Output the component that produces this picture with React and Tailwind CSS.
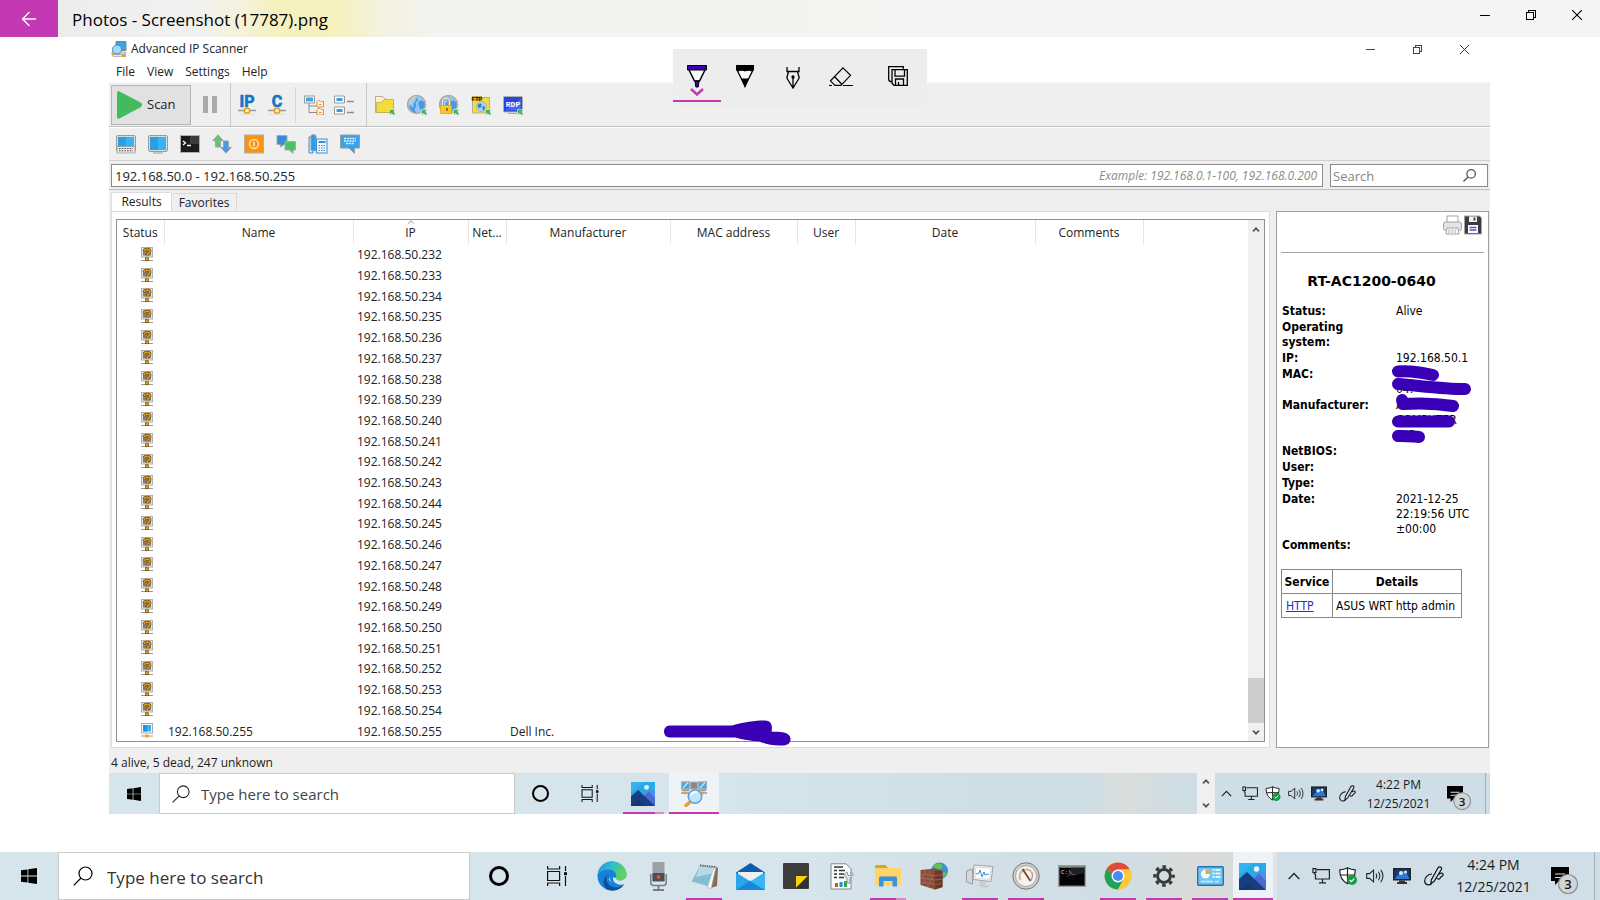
import { ArrowLeft } from 'lucide-react'

const HOSTS = Array.from({ length: 24 }, (_, i) => {
  const ip = `192.168.50.${232 + i}`
  return i === 23
    ? { ip, name: ip, manufacturer: 'Dell Inc.', alive: true }
    : { ip, name: '', manufacturer: '', alive: false }
})

const COLUMNS = [
  { label: 'Status', width: 'w-[47px]' },
  { label: 'Name', width: 'w-[189px]' },
  { label: 'IP', width: 'w-[115px]', sorted: true },
  { label: 'Net...', width: 'w-[38px]' },
  { label: 'Manufacturer', width: 'w-[164px]' },
  { label: 'MAC address', width: 'w-[127px]' },
  { label: 'User', width: 'w-[58px]' },
  { label: 'Date', width: 'w-[180px]' },
  { label: 'Comments', width: 'w-[108px]' },
]

const DETAILS = [
  { label: 'Status:', lines: ['Alive'] },
  { label: 'Operating system:', lines: [] },
  { label: 'IP:', lines: ['192.168.50.1'] },
  { label: 'MAC:', lines: ['\u00a0', '04:'] },
  { label: 'Manufacturer:', lines: ['A', 'COMPUTER', 'INC.'] },
  { label: 'NetBIOS:', lines: [] },
  { label: 'User:', lines: [] },
  { label: 'Type:', lines: [] },
  { label: 'Date:', lines: ['2021-12-25', '22:19:56 UTC', '±00:00'] },
  { label: 'Comments:', lines: [] },
]

/* ---------- window controls ---------- */

function WindowControls({ small }) {
  const size = small ? 'w-[9px] h-[9px]' : 'w-[10px] h-[10px]'
  const cell = small ? 'w-[47px] h-full flex items-center justify-center text-[#333]' : 'w-[46px] h-full flex items-center justify-center text-black'
  return (
    <div className="flex h-full">
      <button aria-label="Minimize" className={cell}>
        <svg viewBox="0 0 10 10" className={size} stroke="currentColor" shapeRendering="crispEdges"><path d="M0 5.5h10" /></svg>
      </button>
      <button aria-label="Restore" className={cell}>
        <svg viewBox="0 0 10 10" className={size} fill="none" stroke="currentColor" shapeRendering="crispEdges">
          <path d="M.5 2.500h7v7h-7zM2.500 2V.5h7v7H8" />
        </svg>
      </button>
      <button aria-label="Close" className={cell}>
        <svg viewBox="0 0 10 10" className={size} stroke="currentColor" strokeWidth="1.1"><path d="M0 0l10 10M10 0L0 10" /></svg>
      </button>
    </div>
  )
}

/* ---------- scanner toolbar icons ---------- */

function Icon({ children, className = 'w-[20px] h-[20px]' }) {
  return <svg viewBox="0 0 20 20" className={className} fill="none">{children}</svg>
}

const GreenArrow = () => (
  <>
    <path d="M14 14h6v6h-6z" fill="#cfd8cf" opacity=".7" />
    <path d="M15 15h4.500l-1.500 1.500L20 19l-1 1-2.500-2.200L15 19.500z" fill="#3fae55" />
  </>
)

const GlobeShape = () => (
  <>
    <circle cx="9.500" cy="9.500" r="9" fill="#8fc8f6" stroke="#a8a8a8" strokeWidth="1.400" />
    <path d="M9 1c-4 0-7 3.500-7 7.500l2 1 2-2-1-2 3-1z" fill="#c9c9c9" />
    <path d="M10 2c1 1.500-2 2-1.500 3.500S5.500 8 6.500 10s-1 3.500-2 1.500-1.500-1-2-1.500c0 4 3 7.500 6 8 0-2-1.500-4-.5-5s2-2.500 1-4 1-2 2-4zM12.500 6c2-1.500 4.500 0 5 3s-1.500 5.500-3.500 6-1-3-2-4-1-4 .5-5z" fill="#4b97e0" />
  </>
)

const NetworkIcon = ({ letter }) => (
  <Icon className="w-[20px] h-[20px] overflow-visible">
    <text x="10" y="12" textAnchor="middle" fontFamily="Liberation Sans Narrow, Roboto, sans-serif" fontWeight="700" fontSize="16" fill="#1274c4" stroke="#1274c4" strokeWidth=".6">{letter}</text>
    <path d="M1 15.500h18" stroke="#999" strokeWidth="1.500" />
    <path d="M2 19.200h16" stroke="#ddd" />
    <rect x="7.500" y="13.500" width="5" height="4.500" rx="1" fill="#fff3c0" stroke="#e59b1b" strokeWidth="1.500" />
  </Icon>
)

const TreeIcon = () => (
  <Icon>
    <rect x=".5" y="1" width="10" height="7" fill="#fff" stroke="#9a9a9a" />
    <rect x="2" y="2.500" width="7" height="4" fill="#38a9ef" />
    <path d="M5 8v9.500h8M5 11h8" stroke="#8c8c8c" />
    <path d="M13 6.500l1-1h2l1 1h2.500V12H13zM13 14.500l1-1h2l1 1h2.500V20H13z" fill="#fff0d8" stroke="#dd9641" />
    <path d="M15 9.500h2.500M15 17.500h2.500" stroke="#dd9641" />
  </Icon>
)

const ListIcon = () => (
  <Icon>
    <path d="M.5 1h10v7H.5zM.5 12h10v7H.5z" fill="#fff" stroke="#9a9a9a" />
    <path d="M2.500 3h6v3h-6zM2.500 14h6v3h-6z" fill="#2f9fe6" />
    <path d="M13 6.500h7M13 17.500h7" stroke="#8c8c8c" strokeWidth="1.500" />
  </Icon>
)

const FolderIcon = () => (
  <Icon>
    <path d="M.5 17.500V1.500h7l2 2h1V8h8v9.500z" fill="#fff0cf" stroke="#b5ae98" />
    <path d="M1.500 17.500V7.500h4l4-3h9v13z" fill="#f4dc3b" stroke="#b9a73f" strokeWidth=".7" />
    <GreenArrow />
  </Icon>
)

const GlobeIcon = () => <Icon><GlobeShape /><GreenArrow /></Icon>

const LockIcon = () => (
  <Icon>
    <GlobeShape />
    <path d="M3.500 11V6.500a3.500 3.500 0 017 0V11" stroke="#9c9c9c" strokeWidth="3" />
    <path d="M3.500 11V6.500a3.500 3.500 0 017 0V11" stroke="#e8e8e8" strokeWidth="1.300" />
    <rect x="1.500" y="10.500" width="11" height="8" fill="#fbc91d" stroke="#d6a51d" strokeWidth=".7" />
    <path d="M8 13v3" stroke="#a5680c" strokeWidth="2" />
    <GreenArrow />
  </Icon>
)

const FtpIcon = () => (
  <Icon>
    <path d="M1.500 18V4.500H9l1.500-2h8V18z" fill="#f4dc3b" stroke="#b5ae98" />
    <path d="M1 1h10v5H1z" fill="#c9b02e" />
    <text x="6" y="6" textAnchor="middle" fontFamily="Liberation Sans Narrow, Roboto, sans-serif" fontWeight="700" fontSize="6" fill="#111">FTP</text>
    <circle cx="10.500" cy="11.500" r="5" fill="#a9d3f5" stroke="#999" strokeWidth=".6" />
    <path d="M8 9c2-1 3 0 2.500 2S8 14 7 12s0-2.500 1-3zM12 11c2 0 2.500 2 1 4s-2-4-1-4z" fill="#2d7fd0" />
    <GreenArrow />
  </Icon>
)

const RdpIcon = () => (
  <Icon>
    <rect x=".5" y="1.500" width="19" height="15.500" rx="1" fill="#2b45d8" stroke="#b0b0b0" />
    <path d="M2 15.500l16-12v12z" fill="#4466f2" />
    <text x="10" y="11.500" textAnchor="middle" fontFamily="Liberation Mono, monospace" fontWeight="700" fontSize="8" fill="#fff">RDP</text>
    <path d="M5 18.500h9" stroke="#aaa" />
    <GreenArrow />
  </Icon>
)

const MonitorIcon = ({ keyboard }) => (
  <Icon>
    <rect x=".5" y="1.500" width="19" height="16" rx="1.500" fill="#d9d9d9" stroke="#9b9b9b" />
    <path d="M2 3h16v13H2z" fill="#38b4f5" />
    <path d="M2 3h8v13H2z" fill="#279fe2" />
    {keyboard && <path d="M1 12.500h18V19H1z" fill="#e6e6e6" stroke="#999" strokeWidth=".7" />}
    {keyboard && <path d="M3 14.500h14M3 16.800h14" stroke="#555" strokeWidth="1" strokeDasharray="1.500 1.200" />}
    {!keyboard && <path d="M5 19h10" stroke="#999" />}
  </Icon>
)

const ConsoleIcon = () => (
  <Icon>
    <rect x=".5" y="1.500" width="19" height="17" fill="#1c1c1c" stroke="#b0b0b0" />
    <path d="M10 2h9v8h-9z" fill="#3c3c3c" />
    <path d="M3 7l2.500 2L3 11M7 11.500h4" stroke="#fff" strokeWidth="1.300" />
  </Icon>
)

const WakeIcon = () => (
  <Icon>
    <path d="M6 .7l5.300 6H8.500V13h-5V6.700H.7z" fill="#5fc673" stroke="#a5a5a5" />
    <path d="M14 19.300l-5.300-6h2.800V7h5v6.300h2.800z" fill="#4c98e4" stroke="#a5a5a5" />
  </Icon>
)

const PowerIcon = () => (
  <Icon>
    <rect x=".5" y="1" width="19" height="18" fill="#fa9312" stroke="#b0b0b0" />
    <circle cx="10" cy="10" r="4.500" stroke="#ffe2b0" strokeWidth="1.500" />
    <path d="M10 7.500v5" stroke="#ffe2b0" strokeWidth="1.500" />
  </Icon>
)

const ChatIcon = () => (
  <Icon>
    <path d="M1 1.500h10v9H8L4.500 13v-2.500H1z" fill="#3b8ad8" stroke="#a8a8a8" />
    <path d="M9 7.500h10.500V16H17v3.500L13.500 16H9z" fill="#4cc266" stroke="#a8a8a8" />
  </Icon>
)

const PhoneIcon = () => (
  <Icon>
    <path d="M1 3h4v16H1z" fill="#d6ebfb" stroke="#3b8fd2" />
    <rect x="3" y=".8" width="5" height="16" rx="1.500" fill="#2f9be4" stroke="#9a9a9a" />
    <rect x="8.500" y="5" width="10.500" height="14" fill="#ecf6fd" stroke="#3b8fd2" />
    <path d="M10.500 8h7" stroke="#3b8fd2" strokeWidth="2" />
    <path d="M10.500 11.500h7M10.500 14h7M10.500 16.500h7" stroke="#3b8fd2" strokeWidth="1.200" strokeDasharray="1.500 1" />
  </Icon>
)

const MessageIcon = () => (
  <Icon>
    <path d="M.5 1h19v13h-5V19.500L9 14H.5z" fill="#3aa2ea" stroke="#9b9b9b" />
    <path d="M4 4.500h12M4 7h12M6 9.500h8" stroke="#e8f5ff" strokeWidth="1.300" strokeDasharray="2 .8" />
  </Icon>
)

const AppIcon = () => (
  <svg viewBox="0 0 16 16" className="w-4 h-4" fill="none">
    <path d="M5 .5h10v9H5z" fill="#38a5ea" stroke="#858585" />
    <path d="M1 11h14v2H1zM2 13.500h12v2H2z" fill="#e4e4e4" stroke="#999" strokeWidth=".6" />
    <circle cx="6" cy="8.500" r="4.500" fill="#a5dbf8" stroke="#3f8fc8" />
    <path d="M1 14l2-2M11 15h4" stroke="#e6a02a" strokeWidth="2" />
  </svg>
)

const UnknownHostIcon = () => (
  <svg viewBox="0 0 12 15" className="block w-[12px] h-[15px]" fill="none" aria-label="Unknown">
    <rect x=".5" y=".5" width="11" height="9.500" fill="#e2e2e2" stroke="#b0b0b0" />
    <rect x="2" y="2" width="8" height="6.500" fill="#7d7d7d" />
    <path d="M0 13.500h12" stroke="#999" />
    <path d="M3 4.200C3.500 1.500 9 1.500 9 4.200 9 6.300 6 6 6 9" stroke="#6b4a10" strokeWidth="2.800" />
    <path d="M3 4.200C3.500 1.500 9 1.500 9 4.200 9 6.300 6 6 6 9" stroke="#e69d14" strokeWidth="1.500" />
    <rect x="4.600" y="10.700" width="2.800" height="3" fill="#e69d14" stroke="#6b4a10" strokeWidth=".7" />
  </svg>
)

const AliveHostIcon = () => (
  <svg viewBox="0 0 12 15" className="block w-[12px] h-[15px]" fill="none" aria-label="Alive">
    <rect x=".5" y=".5" width="11" height="9.500" fill="#fff" stroke="#a8a8a8" />
    <path d="M2 2h8v6.500H2z" fill="#39aef0" />
    <path d="M2 2h4v6.500H2z" fill="#2492dd" />
    <path d="M0 13h12" stroke="#999" />
    <rect x="4" y="11.500" width="4" height="3" rx="1" fill="#eea91c" />
  </svg>
)

const SearchGlyph = ({ className, width = 1.2 }) => (
  <svg viewBox="0 0 20 20" className={className} fill="none" stroke="currentColor" strokeWidth={width}>
    <circle cx="12.500" cy="7.500" r="6.500" />
    <path d="M8 12L.7 19.300" />
  </svg>
)

const Caret = ({ down, className = 'w-[8px] h-[5px]' }) => (
  <svg viewBox="0 0 8 5" className={className} fill="none" stroke="#555" strokeWidth="1.700">
    <path d={down ? 'M1 .7l3 3 3-3' : 'M1 4.300l3-3 3 3'} />
  </svg>
)

/* ---------- taskbar icons ---------- */

const StartIcon = ({ className }) => (
  <svg viewBox="0 0 16 16" className={className} fill="#000">
    <path d="M0 2.300L6.500 1.400v6.200H0zM7.300 1.300L16 0v7.600H7.300zM0 8.400h6.500v6.200L0 13.700zM7.300 8.400H16V16l-8.700-1.300z" />
  </svg>
)

const TaskViewIcon = ({ className }) => (
  <svg viewBox="0 0 20 20" className={className} fill="none" stroke="#111" strokeWidth="1.200">
    <path d="M.6 5.500h12v9H.6zM.6 0v3h12V0M.6 20v-3h12v3M18.500 0v5M18.500 10v10" />
    <path d="M17 6.200h3v3h-3z" fill="#111" stroke="none" />
  </svg>
)

const PhotosIcon = ({ className }) => (
  <svg viewBox="0 0 27 27" className={className}>
    <path d="M0 0h27v27H0z" fill="#2aa9ea" />
    <path d="M0 0h14L0 12z" fill="#34b3f0" />
    <path d="M11 17L22 7l5 5v15H11z" fill="#4a90e8" />
    <path d="M15 16l12 11V18l-7-7z" fill="#4b68d0" />
    <path d="M0 16l8-7 19 18H0z" fill="#173f80" />
    <path d="M0 27l8-7 8 7z" fill="#123468" opacity=".6" />
    <circle cx="17.500" cy="6" r="2.700" fill="#eaf6fd" />
  </svg>
)

const ScannerIcon = ({ className }) => (
  <svg viewBox="0 0 26 26" className={className} fill="none">
    <path d="M.5 1h8v7h-8zM17.500 1h8v7h-8z" fill="#39a9e8" stroke="#a8a8a8" strokeWidth="1.500" />
    <path d="M2 7l5-5.500M19 7l5-5.500" stroke="#b8e3fa" strokeWidth="1.500" />
    <path d="M9.500 1h7v7h-7z" fill="#888" stroke="#b5b5b5" />
    <path d="M1 9.500h7M18 9.500h7M0 12h9M17 12h9" stroke="#999" strokeWidth="1.300" />
    <path d="M3 12h2M21 12h2" stroke="#eba31e" strokeWidth="2.500" />
    <path d="M10 20l-5 4.500" stroke="#e9a223" strokeWidth="3.500" strokeLinecap="round" />
    <circle cx="14" cy="15.500" r="6.700" fill="#bfe6fb" stroke="#5c9fd8" strokeWidth="1.500" />
    <path d="M10 14.500c1-3 4-4 6-3" stroke="#fff" strokeWidth="1.500" />
  </svg>
)

const EdgeIcon = () => (
  <svg viewBox="0 0 30 30" className="w-[30px] h-[30px]">
    <defs>
      <linearGradient id="edgeTop" x1="0" y1="0" x2="1" y2=".4">
        <stop offset="0" stopColor="#1c8fd8" /><stop offset=".5" stopColor="#2fbfd0" /><stop offset="1" stopColor="#62d35b" />
      </linearGradient>
    </defs>
    <circle cx="15" cy="15" r="14.500" fill="#1681d6" />
    <path d="M.6 14C1.500 6 7.500.5 15 .5c8 0 14.500 5.500 14.500 12.500 0 4-3 6.500-6.500 6.500-3 0-5-1-4.500-2.500 2-4-1-8.500-6.500-8.500C7 8.500 2 10.500.6 14z" fill="url(#edgeTop)" />
    <path d="M9.500 16c-1 6 4 10.500 10 10.500 3.500 0 6-1.500 7.500-3C24.500 27.500 20 29.500 15 29.500c-6 0-9-5-8.500-9.500C7 17 8.500 14.500 12 14z" fill="#0f4f9d" />
    <path d="M12.500 16.500c.5 4.500 4.500 7 8.500 7 3 0 5-1 7-2.500l-1 2c-4 1.500-8 1-11.500-1.200s-4-4-3-5.300z" fill="#d7e6ed" />
    <path d="M18.500 17c.4 1.500 2 2.500 4.500 2.500 3 0 6-2 6.500-5l.5 4-2 4c-3 1-7 1.200-9.500-.5s-3-4-2-6z" fill="#d7e6ed" />
  </svg>
)

const MicIcon = () => (
  <svg viewBox="0 0 17 29" className="w-[17px] h-[29px]" fill="none">
    <rect x="2.500" y="0" width="12" height="20" rx="1" fill="#9aa0a6" />
    <path d="M2.500 11h12v8h-12z" fill="#4c4f52" />
    <circle cx="8.500" cy="15" r="2" fill="#e1523d" />
    <path d="M.8 12v8.500c0 2 1.500 3 3 3h9.400c1.500 0 3-1 3-3V12" stroke="#777c80" strokeWidth="1.500" />
    <path d="M8.500 23.500V28M3 28h11" stroke="#777c80" strokeWidth="1.800" />
  </svg>
)

const NotepadIcon = () => (
  <svg viewBox="0 0 27 27" className="w-[27px] h-[27px]">
    <path d="M24 3l3 2-1 18-6 2z" fill="#8a6a50" />
    <path d="M9 2l16 2-5 22-4-2z" fill="#f4f6f7" stroke="#a5afb5" strokeWidth=".7" />
    <path d="M9 3l14 1.500L17 23 .5 18.500z" fill="#86bcd0" />
    <path d="M9 3l14 1.500-2 6L5 14z" fill="#b5d9e5" />
    <path d="M9 2.500l15 1.500" stroke="#666" strokeWidth="2" strokeDasharray="1.300 1" />
  </svg>
)

const MailIcon = () => (
  <svg viewBox="0 0 29 27" className="w-[29px] h-[27px]">
    <path d="M0 9.500L14.500 0 29 9.500V12H0z" fill="#0f5cad" />
    <path d="M2 9h25v10H2z" fill="#f0f0f0" />
    <path d="M0 9.500l14.500 9L29 9.500V27H0z" fill="#2aa4ea" />
    <path d="M0 27l14.500-9.500L29 27z" fill="#1787d8" />
    <path d="M14.500 18.500L29 9.500V27z" fill="#38b5f2" />
  </svg>
)

const StickyIcon = () => (
  <svg viewBox="0 0 26 26" className="w-[26px] h-[26px]">
    <rect width="26" height="26" rx="1" fill="#3d3d3d" />
    <path d="M13 13h12L13 25z" fill="#f9ce0d" />
    <path d="M25 13v12H13z" fill="#2f2f2f" />
  </svg>
)

const ReportIcon = () => (
  <svg viewBox="0 0 24 27" className="w-[24px] h-[27px]" fill="none">
    <path d="M1 .8h15l5 5V26H1z" fill="#fbfcfc" stroke="#7d8a92" />
    <path d="M4 4h9M4 7.500h3M9 7.500h6M4 11h3M9 11h5M4 14.500h3M9 14.500h5" stroke="#333" strokeWidth="1.500" />
    <path d="M5 24v-4h3v4z" fill="#e04f2c" /><path d="M9.500 24v-5h3v5z" fill="#2f8ad4" /><path d="M14 24v-6h3v6z" fill="#35a845" />
    <path d="M17 9c-3 1-3 5 0 6v5h3v-5c3-1 4-5 1-6v3.500h-3z" fill="#dfe7ec" stroke="#7f97a5" />
  </svg>
)

const ExplorerIcon = () => (
  <svg viewBox="0 0 26 22" className="w-[26px] h-[22px]">
    <path d="M0 1.500C0 .7.700 0 1.500 0h9L13 3H0z" fill="#e3a01b" />
    <path d="M0 3h24.500c.8 0 1.500.7 1.500 1.500V20H0z" fill="#fed56b" />
    <path d="M4 21.500V13c0-1 .8-1.500 1.500-1.500h15c.8 0 1.500.5 1.500 1.500v8.500h-4.500V16h-9v5.500z" fill="#3a92d8" />
  </svg>
)

const FirewallIcon = () => (
  <svg viewBox="0 0 28 28" className="w-[28px] h-[28px]" fill="none">
    <circle cx="19.500" cy="9" r="8.500" fill="#3f8fd6" />
    <path d="M14 3c3-2 6-2 8 0s-1 4-3 4-6-2-5-4zM22 10c3-1 5 1 4 3s-4 3-5 1 0-3 1-4z" fill="#67c24b" />
    <path d="M.5 8L15 6.500l7.500 2.500v16L15 27.500.5 23z" fill="#8a4c3a" />
    <path d="M15 8.500l7.500.5v16L15 27.500z" fill="#6a3729" />
    <path d="M.5 12l14.500 1.500 7.500-1M.5 16l14.500 2 7.500-1M.5 20l14.500 2.500 7.500-1M5 8v4M10 8v5M3 12v4M8 13v4M12 13v5M5 17v4M10 17v5M3 21v3M8 22v3" stroke="#b07a66" strokeWidth=".6" />
  </svg>
)

const PerfIcon = () => (
  <svg viewBox="0 0 28 26" className="w-[28px] h-[26px]" fill="none">
    <path d="M.5 8l6-2v15l-6-2z" fill="#d4d7d9" stroke="#989c9f" />
    <path d="M8 2l19 1.500-2 15-18-2z" fill="#eef1f2" stroke="#9ea3a6" />
    <path d="M10 4.200l15 1.200-1.500 11L9 15z" fill="#fff" stroke="#c6ccd0" strokeWidth=".6" />
    <path d="M10 11l3-1 1-3 2 7 2-5 1 3 4-1" stroke="#3a8fd0" />
    <path d="M14 18l-1 4h-4l11 3 4-2-5-1 .5-3z" fill="#c9cccf" />
  </svg>
)

const GaugeIcon = () => (
  <svg viewBox="0 0 28 28" className="w-[28px] h-[28px]" fill="none">
    <circle cx="14" cy="14" r="13.200" fill="#cfcfcf" stroke="#777" />
    <circle cx="14" cy="14" r="10.500" fill="#f5f3ef" stroke="#a7a5a0" />
    <path d="M8.500 18a7 7 0 0111-8.500" stroke="#c9b9a5" strokeWidth="2" />
    <path d="M10.500 7l8 12" stroke="#8a3c20" strokeWidth="1.800" />
    <path d="M19.500 10c1.500 2 1 6-1 9" stroke="#b59a7a" strokeWidth="1.500" />
  </svg>
)

const CmdIcon = () => (
  <svg viewBox="0 0 28 22" className="w-[28px] h-[22px]" fill="none">
    <rect x=".7" y=".7" width="26.600" height="20.600" fill="#050505" stroke="#9a9fa3" strokeWidth="1.400" />
    <path d="M1.500 2h25" stroke="#ccc" />
    <path d="M14 2.500h12.500V8L8 12z" fill="#333" opacity=".6" />
    <text x="3" y="8.500" fontFamily="Liberation Mono, monospace" fontSize="6" fill="#ddd">C:\_</text>
  </svg>
)

const ChromeIcon = () => (
  <svg viewBox="0 0 28 28" className="w-[28px] h-[28px]">
    <circle cx="14" cy="14" r="13.500" fill="#fcc934" />
    <path d="M14 14L2.300 7.300a13.500 13.500 0 0123.400 0z" fill="#dd4b3e" />
    <path d="M14 14L2.300 7.300A13.500 13.500 0 0014 27.500l5.500-10z" fill="#23a05a" />
    <path d="M14 7.300h11.700a13.500 13.500 0 01-.2 13.700L14 27.500l5.500-10z" fill="#fcc934" />
    <circle cx="14" cy="14" r="6.500" fill="#fff" />
    <circle cx="14" cy="14" r="5" fill="#4a8af4" />
  </svg>
)

const ControlPanelIcon = () => (
  <svg viewBox="0 0 27 20" className="w-[27px] h-[20px]" fill="none">
    <rect x=".7" y=".7" width="25.600" height="18.600" rx="1" fill="#6fc5f3" stroke="#2473ab" strokeWidth="1.400" />
    <circle cx="8.500" cy="8" r="4.500" fill="#f4f9fc" />
    <path d="M8.500 8V3.500A4.500 4.500 0 0113 8z" fill="#f4a125" />
    <path d="M15.500 4h8M15.500 7.500h8M15.500 11h8" stroke="#e2f4fd" strokeWidth="1.800" strokeDasharray="2 1 8" />
    <path d="M4 15.500h12M18 15.500h4" stroke="#c9ebfb" strokeWidth="1.500" />
  </svg>
)

const SettingsIcon = () => (
  <svg viewBox="0 0 24 24" className="w-[22px] h-[22px]" fill="none" stroke="#3a3a3a">
    <circle cx="12" cy="12" r="7" strokeWidth="3.200" />
    <circle cx="12" cy="12" r="10" strokeWidth="3.600" strokeDasharray="3.900 3.954" strokeDashoffset="1.950" />
  </svg>
)

/* ---------- tray ---------- */

const TrayNetwork = ({ className }) => (
  <svg viewBox="0 0 18 16" className={className} fill="none" stroke="#222" strokeWidth="1.200">
    <path d="M5 1.600h12.400v9.400H3.500V6M10.500 11v3.500M7 14.800h7" />
    <path d="M1 .6h3v4H1zM2.500 4.600v2" />
  </svg>
)

const TrayShield = ({ className }) => (
  <svg viewBox="0 0 18 18" className={className} fill="none">
    <path d="M8.500.8c2.500 1.500 5 2 7.700 2 .3 6-2.200 11-7.700 14C3 13.800.5 8.800.8 2.800c2.700 0 5.200-.5 7.700-2z" fill="#fff" stroke="#222" strokeWidth="1.200" />
    <path d="M8.500 1v15.500M1 8h15" stroke="#222" strokeWidth="1.200" />
    <circle cx="13" cy="13" r="5" fill="#169a45" />
    <path d="M10.700 13l1.700 1.600 2.900-3" stroke="#fff" strokeWidth="1.200" />
  </svg>
)

const TrayVolume = ({ className }) => (
  <svg viewBox="0 0 19 16" className={className} fill="none" stroke="#222" strokeWidth="1.100">
    <path d="M.7 5.500h3L8 1.700v12.600l-4.300-3.800h-3z" />
    <path d="M10.500 5.500c1 1.500 1 3.500 0 5M13 3.500c2 2.700 2 6.300 0 9M15.500 1.500c3 4 3 9 0 13" />
  </svg>
)

const TrayDisplay = ({ className }) => (
  <svg viewBox="0 0 18 16" className={className}>
    <path d="M0 0h18v12.500H0z" fill="#222" />
    <path d="M1.500 1.500h15v9.500h-15z" fill="#123c78" />
    <path d="M1.500 11L9 3l4 1 3.500 7z" fill="#2f78d0" />
    <circle cx="8" cy="5" r="2" fill="#dfe9f5" /><circle cx="12.500" cy="4" r="1.500" fill="#dfe9f5" />
    <path d="M6 12.500h6v1.500h2V16H4v-2h2z" fill="#333" />
  </svg>
)

const TrayPen = ({ className }) => (
  <svg viewBox="0 0 20 20" className={className} fill="none" stroke="#111" strokeWidth="1.200">
    <path d="M16 .8c1.500.2 2 1.500 1.300 2.700L10 15.500l-3 2 .3-3.500L14 1.800c.5-.8 1.200-1.100 2-1z" />
    <path d="M8 8c-4 0-7.300 3.500-7.300 7 0 4 4.500 5 7 2.500M12.500 12c1.500 2 3.500 1 4-.5s3.500-1.500 2.500-3.500c-1-1.500-3-1-4 .5" />
  </svg>
)

const TrayNote = ({ className }) => (
  <svg viewBox="0 0 27 27" className={className}>
    <path d="M0 0h18v14H8l-4 4v-4H0z" fill="#000" />
    <path d="M4 7h10M4 10.500h8" stroke="#d5e2e8" strokeWidth="1.200" />
    <circle cx="17" cy="17" r="9.500" fill="#d2d5d6" stroke="#8a8f92" strokeWidth="1.200" />
    <text x="17" y="22" textAnchor="middle" fontFamily="Open Sans, sans-serif" fontWeight="600" fontSize="13" fill="#111">3</text>
  </svg>
)

function Tray({ small, time, date }) {
  const s = small
    ? { cell: 'w-[23px]', pen: 'w-[34px]', clock: 'w-[69px] text-xs leading-[19px]', note: 'w-[52px]', icon: 'w-[16px] h-[15px]', penIcon: 'w-[17px] h-[17px]', noteIcon: 'w-[24px] h-[24px]', caret: 'w-[11px] h-[7px]', end: 'w-[5px]' }
    : { cell: 'w-[27px]', pen: 'w-[38px]', clock: 'w-[81px] text-sm leading-[22px]', note: 'w-[60px]', icon: 'w-[18px] h-[18px]', penIcon: 'w-[20px] h-[20px]', noteIcon: 'w-[27px] h-[27px]', caret: 'w-[12px] h-[8px]', end: 'w-[6px]' }
  const btn = 'flex items-center justify-center h-full'
  return (
    <div className="flex items-center h-full">
      <button aria-label="Show hidden icons" className={`${btn} ${s.cell}`}>
        <svg viewBox="0 0 12 8" className={s.caret} fill="none" stroke="#222" strokeWidth="1.300"><path d="M.7 7L6 1.500 11.300 7" /></svg>
      </button>
      <button aria-label="Network" className={`${btn} ${s.cell}`}><TrayNetwork className={s.icon} /></button>
      <button aria-label="Security" className={`${btn} ${s.cell}`}><TrayShield className={s.icon} /></button>
      <button aria-label="Volume" className={`${btn} ${s.cell}`}><TrayVolume className={s.icon} /></button>
      <button aria-label="Display" className={`${btn} ${s.cell}`}><TrayDisplay className={s.icon} /></button>
      <button aria-label="Ink workspace" className={`${btn} ${s.pen}`}><TrayPen className={s.penIcon} /></button>
      <div className={`text-center whitespace-nowrap text-[#1a1a1a] ${s.clock}`}>
        <div>{time}</div>
        <div>{date}</div>
      </div>
      <button aria-label="3 notifications" className={`${btn} ${s.note} pt-2`}><TrayNote className={s.noteIcon} /></button>
      <div className={`h-full border-l border-[#a0afb6] ${s.end}`} />
    </div>
  )
}

const APPS = [
  { name: 'Edge', icon: EdgeIcon },
  { name: 'Voice Recorder', icon: MicIcon },
  { name: 'Notepad', icon: NotepadIcon, open: true },
  { name: 'Mail', icon: MailIcon },
  { name: 'Sticky Notes', icon: StickyIcon },
  { name: 'Report', icon: ReportIcon },
  { name: 'File Explorer', icon: ExplorerIcon, open: true, stacked: true },
  { name: 'Firewall', icon: FirewallIcon },
  { name: 'Resource Monitor', icon: PerfIcon, open: true },
  { name: 'Performance', icon: GaugeIcon, open: true },
  { name: 'Command Prompt', icon: CmdIcon },
  { name: 'Chrome', icon: ChromeIcon, open: true },
  { name: 'Settings', icon: SettingsIcon, open: true },
  { name: 'Control Panel', icon: ControlPanelIcon, open: true },
]

/* ---------- sections ---------- */

function TitleBar() {
  return (
    <header className="h-[37px] flex items-center bg-[linear-gradient(90deg,#ebebeb_0px,#f1f1f0_200px,#f3f2dc_240px,#f5f1bd_280px,#f5f1c0_340px,#f3f2e2_385px,#f3f3f2_440px,#f4f4f4_100%)]">
      <button aria-label="Back" className="w-[58px] h-full bg-[#c239b3] text-white flex items-center justify-center">
        <ArrowLeft className="w-[22px] h-[22px]" strokeWidth={1.5} />
      </button>
      <h1 className="flex-1 pl-[14px] pt-[2px] text-[17px] leading-6 text-black">Photos - Screenshot (17787).png</h1>
      <div className="h-[30px] self-start"><WindowControls /></div>
    </header>
  )
}

function InkToolbar() {
  const tool = 'w-[48px] h-full flex flex-col items-center pt-4'
  return (
    <div className="absolute left-1/2 top-[49px] -translate-x-1/2 z-10 flex w-[254px] h-[58px] bg-[#ededed]">
      <button aria-label="Ballpoint pen" className="relative w-[48px] h-full flex flex-col items-center pt-4">
        <svg viewBox="0 0 20 23" className="w-[20px] h-[23px]" fill="none">
          <path d="M2 5l5.500 11v0h5L18 5" stroke="#000" strokeWidth="1.500" fill="#f8f8f8" />
          <path d="M.5.500h19v4.500H.5z" fill="#3a00b5" stroke="#000" />
          <path d="M8 16h4l-.8 6H8.800z" fill="#3a00b5" stroke="#000" />
        </svg>
        <svg viewBox="0 0 14 8" className="w-[14px] h-[8px]" fill="none" stroke="#c239b3" strokeWidth="2.500"><path d="M1 1l6 5.500L13 1" /></svg>
        <span className="absolute left-0 bottom-[5px] w-full h-[2px] bg-[#c239b3]" />
      </button>
      <button aria-label="Pencil" className={tool}>
        <svg viewBox="0 0 18 23" className="w-[18px] h-[23px]">
          <path d="M1 5l8 16 8-16z" fill="#f8f8f8" stroke="#000" strokeWidth="1.300" />
          <path d="M0 0h18v5l-2.500 1.500-3-1.500L9 6.500 5.500 5l-3 1.500L0 5zM5 13.500h8L9 23z" fill="#000" />
        </svg>
      </button>
      <button aria-label="Calligraphy pen" className={tool}>
        <svg viewBox="0 0 14 22" className="w-[14px] h-[22px] mt-[2px]" fill="none" stroke="#000" strokeWidth="1.300">
          <path d="M1 0v4.500h12V0M2.500 4.500L.8 11 7 21l6.200-10-1.700-6.500M7 21V10" />
          <circle cx="7" cy="10" r="1" fill="#000" />
        </svg>
      </button>
      <button aria-label="Eraser" className={tool}>
        <svg viewBox="0 0 24 20" className="w-[24px] h-[20px] mt-[2px]" fill="none" stroke="#000" strokeWidth="1.200">
          <path d="M14 .8l7.500 7.500L12 18.300H6l-4.500-4.500zM5.500 9.500l7.500 8M0 18.500h3M14 18.500h10" />
        </svg>
      </button>
      <button aria-label="Save" className="w-[62px] h-full flex flex-col items-center pt-4 pl-1">
        <svg viewBox="0 0 20 20" className="w-[20px] h-[20px] mt-px" fill="none" stroke="#000" strokeWidth="1.300">
          <path d="M4 15.500H2L.7 14V.7h14.600v2" />
          <path d="M4 3.700h15.300v15.600H6l-2-2zM7 3.700v6.500h9.500V3.700M7.500 19v-6h8v6M10.500 19v-3" />
        </svg>
      </button>
    </div>
  )
}

function ScannerToolbars() {
  return (
    <>
      <div className="h-[45px] flex items-center bg-[#efefef] border-t border-b border-t-[#f6f6f6] border-b-[#c2c2c2]">
        <button className="ml-[2px] w-[80px] h-[40px] flex items-center gap-[5px] pl-[5px] bg-[#e1e1e1] border border-[#b4b4b4] text-[13px] text-[#222]">
          <svg viewBox="0 0 25 28" className="w-[25px] h-[28px]"><path d="M0 2C0 .5 1 0 2.500.5l21 11c2 1.200 2 3.500 0 4.700l-21 11.300C1 28 0 27.500 0 26z" fill="#42bb5c" /></svg>
          Scan
        </button>
        <button aria-label="Pause" className="ml-3 w-[14px] flex gap-1">
          <span className="w-[5px] h-[17px] bg-[#a9a9a9]" />
          <span className="w-[5px] h-[17px] bg-[#a9a9a9]" />
        </button>
        <div className="ml-[13px] w-px h-full bg-[#c9c9c9]" />
        <div className="flex gap-[10px] pl-[6px] pr-2">
          <button aria-label="IP range"><NetworkIcon letter="IP" /></button>
          <button aria-label="Class C subnet"><NetworkIcon letter="C" /></button>
        </div>
        <div className="w-px h-9 bg-[#d5d5d5]" />
        <div className="flex gap-[10px] pl-2 pr-3">
          <button aria-label="Expand all"><TreeIcon /></button>
          <button aria-label="Collapse all"><ListIcon /></button>
        </div>
        <div className="w-px h-full bg-[#c9c9c9]" />
        <div className="flex gap-3 pl-2">
          <button aria-label="Explore"><FolderIcon /></button>
          <button aria-label="HTTP"><GlobeIcon /></button>
          <button aria-label="HTTPS"><LockIcon /></button>
          <button aria-label="FTP"><FtpIcon /></button>
          <button aria-label="RDP"><RdpIcon /></button>
        </div>
      </div>
      <div className="h-[34px] flex items-center gap-3 pl-[7px] bg-[#efefef] border-t border-b border-t-white border-b-[#cfcfcf]">
        <button aria-label="Radmin full control"><MonitorIcon keyboard /></button>
        <button aria-label="Radmin view"><MonitorIcon /></button>
        <button aria-label="Telnet"><ConsoleIcon /></button>
        <button aria-label="File transfer"><WakeIcon /></button>
        <button aria-label="Shutdown"><PowerIcon /></button>
        <button aria-label="Text chat"><ChatIcon /></button>
        <button aria-label="Voice chat"><PhoneIcon /></button>
        <button aria-label="Send message"><MessageIcon /></button>
      </div>
      <div className="h-[29px] flex items-center gap-[7px] pl-[2px] pr-[2px] bg-[#efefef] border-b border-[#bdbdbd]">
        <label className="flex-1 h-[23px] flex items-center bg-white border border-[#8a8a8a] px-[3px] pt-[2px]">
          <input aria-label="IP range" defaultValue="192.168.50.0 - 192.168.50.255" className="flex-1 min-w-0 text-[13px] leading-5 text-[#222] outline-none" />
          <span className="pr-[2px] text-xs italic text-[#8c8c8c]">Example: 192.168.0.1-100, 192.168.0.200</span>
        </label>
        <label className="w-[158px] h-[23px] flex items-center bg-white border border-[#8a8a8a] pl-[2px] pr-[11px]">
          <input aria-label="Search" placeholder="Search" className="flex-1 min-w-0 pt-[2px] text-[13px] leading-5 placeholder-[#858585] outline-none" />
          <SearchGlyph className="w-[13px] h-[13px] text-[#555]" width={2} />
        </label>
      </div>
    </>
  )
}

function HostTable() {
  return (
    <div className="flex border border-[#8b8f98]">
      <table className="flex-1 h-[521px] table-fixed border-collapse text-xs leading-4 text-[#222]">
        <thead>
          <tr>
            {COLUMNS.map(({ label, width, sorted }) => (
              <th key={label} className={`${width} relative h-[24px] p-0 pt-[2px] font-normal whitespace-nowrap border-r border-[#e5e5e5]`}>
                {label}
                {sorted && (
                  <svg viewBox="0 0 8 5" className="absolute left-1/2 top-0 -translate-x-1/2 w-[7px] h-[4px]" fill="none" stroke="#777"><path d="M.5 4.500L4 1l3.500 3.500" /></svg>
                )}
              </th>
            ))}
            <th className="p-0" />
          </tr>
        </thead>
        <tbody>
          {HOSTS.map(h => (
            <tr key={h.ip}>
              <td className="p-0 pl-6">{h.alive ? <AliveHostIcon /> : <UnknownHostIcon />}</td>
              <td className="p-0 pt-[2px] pl-1">{h.name}</td>
              <td className="p-0 pt-[2px] pl-1">{h.ip}</td>
              <td className="p-0" />
              <td className="p-0 pt-[2px] pl-1">{h.manufacturer}</td>
              <td className="relative p-0">
                {h.alive && (
                  <svg viewBox="0 0 128 26" className="absolute -left-[6px] top-0 w-[128px] h-[26px] z-10" fill="#3a00b5">
                    <path d="M6 5.500h62C80 2 92 .5 101 .5c6 0 8 5 6.500 11 6 .5 13 0 16 2.500 5 3 4 11-4 11.500-9 .5-18-1-24-4-8-.5-18-2-24-4H6c-8 0-8-12 0-12z" />
                  </svg>
                )}
              </td>
              <td className="p-0" />
              <td className="p-0" />
              <td className="p-0" />
              <td className="p-0" />
            </tr>
          ))}
        </tbody>
      </table>
      <div className="w-4 flex flex-col items-center bg-[#f0f0f0]">
        <button aria-label="Scroll up" className="w-full h-[18px] flex items-center justify-center"><Caret /></button>
        <div className="flex-1" />
        <div className="w-full h-[45px] bg-[#cdcdcd]" />
        <button aria-label="Scroll down" className="w-full h-[18px] flex items-center justify-center"><Caret down /></button>
      </div>
    </div>
  )
}

function DetailsPanel() {
  return (
    <aside className="w-[213px] mt-[21px] mr-px px-1 bg-white border border-[#9f9f9f] font-['DejaVu_Sans_Condensed','DejaVu_Sans',sans-serif] text-xs text-black">
      <div className="h-[41px] flex justify-end gap-[2px] pt-[3px] pr-[2px] border-b border-[#a5a5a5]">
        <button aria-label="Print" className="self-start">
          <svg viewBox="0 0 19 20" className="w-[19px] h-[20px]" fill="none" stroke="#a3a3a3">
            <path d="M4 7V1h11v6" fill="#fff" />
            <rect x=".5" y="7" width="18" height="8.500" rx="2" fill="#dfe5e8" />
            <path d="M4 13h11l1 6H3z" fill="#fff" />
            <path d="M5.500 15h8M5 17h9" strokeDasharray="2 1" />
          </svg>
        </button>
        <button aria-label="Save" className="self-start">
          <svg viewBox="0 0 18 20" className="w-[18px] h-[20px]" fill="none">
            <path d="M.5 1h15l2 2v16H.5z" fill="#3b3b44" stroke="#a3a3a3" />
            <path d="M5 1.500h8V7H5z" fill="#f1f1f1" /><path d="M9.500 2.500h2v3h-2z" fill="#444" />
            <path d="M4 10h10v8H4z" fill="#fff" /><path d="M5.500 12.500h7M5.500 15h7" stroke="#5a4fd0" strokeWidth="1.300" />
          </svg>
        </button>
      </div>
      <div className="w-[181px]">
        <h2 className="pt-[18px] pb-[13px] text-center font-bold text-sm leading-5 font-['DejaVu_Sans',sans-serif]">RT-AC1200-0640</h2>
      </div>
      <dl className="relative flex flex-col gap-px pl-px leading-[15px]">
        {DETAILS.map(({ label, lines }) => (
          <div key={label} className="flex">
            <dt className="w-[114px] pr-6 shrink-0 font-bold">{label}</dt>
            <dd className="whitespace-nowrap">
              {lines.map(line => <div key={line}>{line}</div>)}
            </dd>
          </div>
        ))}
        <svg viewBox="0 0 84 80" className="absolute left-[109px] top-[60px] w-[84px] h-[80px]" fill="none" stroke="#3a00b5" strokeWidth="12" strokeLinecap="round" strokeLinejoin="round">
          <path d="M8 7.500c12-1 24 1 35 3.500M8 20c24 2 46 5 67 5M12 36l1 4c14-1 32-1 50 2M8 57.500h51M8 72c8-.5 14 .5 21 1" />
        </svg>
      </dl>
      <table className="mt-4 w-[181px] border-collapse whitespace-nowrap">
        <thead>
          <tr>
            <th className="w-[51px] h-[24px] p-0 font-bold border border-[#888]">Service</th>
            <th className="p-0 font-bold border border-[#888]">Details</th>
          </tr>
        </thead>
        <tbody>
          <tr>
            <td className="h-[24px] p-0 pl-1 border border-[#888]"><a href="#http" className="text-[#1a2fe0] underline">HTTP</a></td>
            <td className="p-0 pl-[3px] border border-[#888]">ASUS WRT http admin</td>
          </tr>
        </tbody>
      </table>
    </aside>
  )
}

function InnerTaskbar() {
  return (
    <div className="h-[41px] flex items-center bg-[#d6e4eb]">
      <button aria-label="Start" className="w-[50px] h-full flex items-center justify-center"><StartIcon className="w-[14px] h-[14px]" /></button>
      <label className="w-[356px] h-full flex items-center gap-[11px] pl-[12px] bg-white border border-[#c9c9c9]">
        <SearchGlyph className="w-[18px] h-[18px] text-[#222]" />
        <input aria-label="Taskbar search" placeholder="Type here to search" className="flex-1 min-w-0 text-[15px] leading-5 placeholder-[#444] outline-none" />
      </label>
      <button aria-label="Cortana" className="w-[50px] h-full flex items-center justify-center">
        <span className="w-[17px] h-[17px] rounded-full border-2 border-black" />
      </button>
      <button aria-label="Task view" className="w-[50px] h-full flex items-center justify-center"><TaskViewIcon className="w-[18px] h-[17px]" /></button>
      <button aria-label="Photos" className="relative w-[50px] h-full ml-[3px] flex items-center justify-center">
        <PhotosIcon className="w-[24px] h-[24px]" />
        <span className="absolute bottom-0 left-[5px] w-[32px] h-[2px] bg-[#c239b3]" />
        <span className="absolute bottom-0 left-[37px] w-[9px] h-[2px] bg-[#d889d0]" />
      </button>
      <button aria-label="Advanced IP Scanner" className="relative w-[50px] h-full ml-px flex items-center justify-center bg-[#eef3f6]">
        <ScannerIcon className="w-[26px] h-[26px]" />
        <span className="absolute bottom-0 left-0 w-full h-[2px] bg-[#c239b3]" />
      </button>
      <div className="flex-1 h-full bg-[linear-gradient(90deg,#d6e4eb_0%,#d0dfe6_50%,#cfdee5_79%,#d6dedf_81%,#dadddb_86%,#d5dddf_90%,#cfdee5_96%,#cfdee5_100%)]" />
      <div className="w-[18px] h-full flex flex-col items-center justify-between py-[6px] bg-[#f0f0f0]">
        <Caret />
        <Caret down />
      </div>
      <div className="h-full bg-[#cfdee6]"><Tray small time="4:22 PM" date="12/25/2021" /></div>
    </div>
  )
}

function Taskbar() {
  return (
    <footer className="h-[48px] flex items-center bg-[linear-gradient(90deg,#d6e5ec_0%,#d6e4eb_50%,#d0dde3_71%,#d6dcdd_73%,#dbdbd8_75%,#d6dcdd_77%,#d0dfe7_80%,#d0dfe7_100%)]">
      <button aria-label="Start" className="w-[58px] h-full flex items-center justify-center"><StartIcon className="w-[16px] h-[16px]" /></button>
      <label className="w-[412px] h-full flex items-center gap-[14px] pl-[14px] bg-white border border-[#c9c9c9]">
        <SearchGlyph className="w-[20px] h-[20px] text-black" />
        <input aria-label="Search Windows" placeholder="Type here to search" className="flex-1 min-w-0 pt-[3px] text-[17px] leading-6 placeholder-[#333] outline-none" />
      </label>
      <button aria-label="Cortana" className="w-[58px] h-full flex items-center justify-center">
        <span className="w-[20px] h-[20px] rounded-full border-[3px] border-black" />
      </button>
      <button aria-label="Task view" className="w-[58px] h-full flex items-center justify-center"><TaskViewIcon className="w-[20px] h-[20px]" /></button>
      <div className="flex h-full ml-[3px]">
        {APPS.map(({ name, icon: AppGlyph, open, stacked }) => (
          <button key={name} aria-label={name} className="relative w-[46px] h-full flex items-center justify-center">
            <AppGlyph />
            {open && <span className="absolute bottom-0 left-[5px] w-[36px] h-[2px] bg-[#c239b3]" />}
            {stacked && <span className="absolute bottom-0 left-[31px] w-[10px] h-[2px] bg-[#d889d0]" />}
          </button>
        ))}
        <button aria-label="Photos" className="relative w-[44px] h-full flex items-center pl-[6px] bg-[#edf3f6] border-r-4 border-[#dfe6e9]">
          <PhotosIcon className="w-[27px] h-[27px]" />
          <span className="absolute bottom-0 left-0 w-full h-[2px] bg-[#c239b3]" />
        </button>
      </div>
      <div className="flex-1" />
      <Tray time="4:24 PM" date="12/25/2021" />
    </footer>
  )
}

export default function App() {
  return (
    <div className="relative min-h-screen flex flex-col bg-white font-['Open_Sans','Noto_Sans',sans-serif]">
      <TitleBar />
      <InkToolbar />
      <main className="flex-1 pl-[109px] pr-[110px] pb-[38px]">
        <div className="h-6 flex items-center gap-1 pl-[2px] pr-[2px]">
          <AppIcon />
          <span className="flex-1 text-xs text-[#222]">Advanced IP Scanner</span>
          <WindowControls small />
        </div>
        <nav className="h-[21px] flex items-center gap-3 pl-[7px] text-xs text-[#222]">
          <button>File</button>
          <button>View</button>
          <button>Settings</button>
          <button>Help</button>
        </nav>
        <ScannerToolbars />
        <div className="flex bg-[#efefef]">
          <div className="flex-1 ml-[2px] mr-[6px]">
            <div className="h-[21px] flex items-end text-xs text-[#222]">
              <button className="w-[60px] h-[19px] bg-white border-t border-l border-[#ddd]">Results</button>
              <button className="w-[66px] h-[18px] border border-b-0 border-[#d9d9d9]">Favorites</button>
            </div>
            <div className="h-[537px] bg-white border border-[#dcdcdc] px-1 pt-[7px]">
              <HostTable />
            </div>
          </div>
          <DetailsPanel />
        </div>
        <div className="h-[25px] flex items-center pl-[2px] pt-1 bg-[#efefef] text-xs text-[#222]">4 alive, 5 dead, 247 unknown</div>
        <InnerTaskbar />
      </main>
      <Taskbar />
    </div>
  )
}
